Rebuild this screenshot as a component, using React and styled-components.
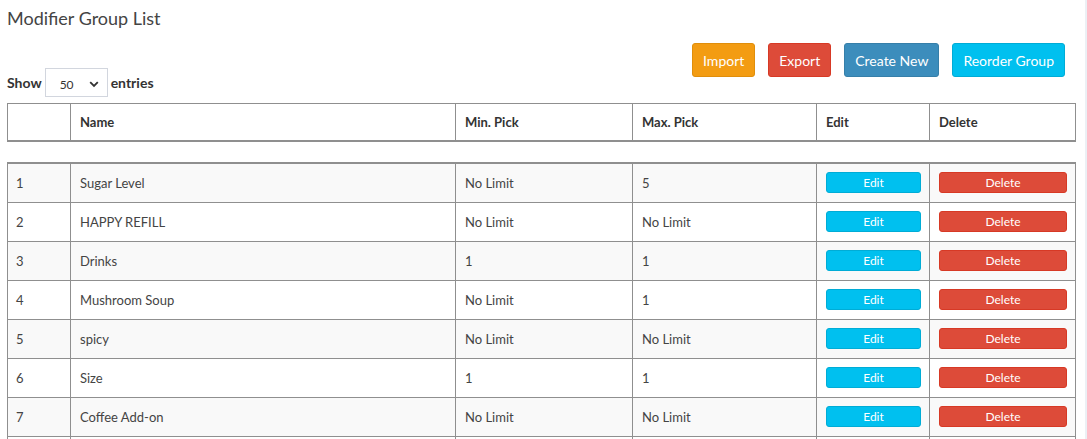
import React from 'react';
import styled, { createGlobalStyle } from 'styled-components';

const GlobalStyle = createGlobalStyle`
  html, body {
    margin: 0;
    padding: 0;
    overflow: hidden;
    background: #ecf0f5;
  }
  body {
    font-family: "Source Sans Pro", Lato, "Liberation Sans", sans-serif;
    color: #333;
  }
`;

const rows = [
  { id: 1, name: 'Sugar Level', min: 'No Limit', max: '5' },
  { id: 2, name: 'HAPPY REFILL', min: 'No Limit', max: 'No Limit' },
  { id: 3, name: 'Drinks', min: '1', max: '1' },
  { id: 4, name: 'Mushroom Soup', min: 'No Limit', max: '1' },
  { id: 5, name: 'spicy', min: 'No Limit', max: 'No Limit' },
  { id: 6, name: 'Size', min: '1', max: '1' },
  { id: 7, name: 'Coffee Add-on', min: 'No Limit', max: 'No Limit' }
];

const cols = [63, 385, 177, 184, 113, 146];

const ColGroup = () => (
  <colgroup>
    {cols.map((w, i) => (
      <col key={i} style={{ width: w }} />
    ))}
  </colgroup>
);

const App = () => (
  <Page>
    <GlobalStyle />
    <Box>
      <Title>Modifier Group List</Title>
      <Toolbar>
        <Length>
          <span>Show</span>
          <SelectBox>
            <span>50</span>
            <svg width="10" height="7" viewBox="0 0 10 7">
              <path d="M1.2 1.2 L5 5 L8.8 1.2" fill="none" stroke="#333" strokeWidth="1.8" />
            </svg>
          </SelectBox>
          <span>entries</span>
        </Length>
        <Actions>
          <Btn bg="#f39c12" bd="#e08e0b">Import</Btn>
          <Btn bg="#dd4b39" bd="#d73925">Export</Btn>
          <Btn bg="#3c8dbc" bd="#367fa9">Create New</Btn>
          <Btn bg="#00c0ef" bd="#00acd6">Reorder Group</Btn>
        </Actions>
      </Toolbar>
      <HeadTable>
        <ColGroup />
        <thead>
          <tr>
            <Th></Th>
            <Th>Name</Th>
            <Th>Min. Pick</Th>
            <Th>Max. Pick</Th>
            <Th>Edit</Th>
            <Th>Delete</Th>
          </tr>
        </thead>
      </HeadTable>
      <BodyTable>
        <ColGroup />
        <tbody>
          {rows.map((r, i) => (
            <Row key={r.id} odd={i % 2 === 0}>
              <Td>{r.id}</Td>
              <Td>{r.name}</Td>
              <Td>{r.min}</Td>
              <Td>{r.max}</Td>
              <Td>
                <SmallBtn bg="#00c0ef" bd="#00acd6">Edit</SmallBtn>
              </Td>
              <Td>
                <SmallBtn bg="#dd4b39" bd="#d73925">Delete</SmallBtn>
              </Td>
            </Row>
          ))}
          <Row>
            <Td />
            <Td />
            <Td />
            <Td />
            <Td />
            <Td />
          </Row>
        </tbody>
      </BodyTable>
    </Box>
  </Page>
);

const Page = styled.div`
  width: 1085px;
  height: 439px;
  background: #fff;
  overflow: hidden;
`;

const Box = styled.div`
  padding: 0 10px 0 7px;
`;

const Title = styled.h3`
  margin: 0;
  padding-top: 6px;
  font-size: 18px;
  font-weight: 400;
  line-height: 24px;
  color: #444;
`;

const Toolbar = styled.div`
  display: flex;
  justify-content: space-between;
  align-items: flex-start;
  margin-top: 13px;
  height: 60px;
`;

const Length = styled.div`
  display: flex;
  align-items: center;
  gap: 3px;
  margin-top: 25px;
  font-size: 14px;
  font-weight: 700;
  color: #333;
`;

const SelectBox = styled.div`
  width: 63px;
  height: 29px;
  border: 1px solid #d2d6de;
  display: flex;
  align-items: center;
  justify-content: space-between;
  padding: 3px 8px 0 14px;
  box-sizing: border-box;
  font-size: 12px;
  font-weight: 400;
  color: #333;
`;

const Actions = styled.div`
  display: flex;
  gap: 13px;
  margin-right: 10px;
`;

const Btn = styled.button`
  height: 34px;
  padding: 0 10px;
  border: 1px solid ${p => p.bd};
  border-radius: 3px;
  background: ${p => p.bg};
  color: #fff;
  font-family: inherit;
  font-size: 14px;
`;

const HeadTable = styled.table`
  width: 1068px;
  table-layout: fixed;
  border-collapse: collapse;
  border: 1px solid #8f8f8f;
  border-bottom-width: 2px;
`;

const Th = styled.th`
  height: 36px;
  padding: 0 9px;
  border-left: 1px solid #8f8f8f;
  text-align: left;
  font-size: 13px;
  font-weight: 700;
  color: #333;
`;

const BodyTable = styled.table`
  width: 1068px;
  margin-top: 20px;
  table-layout: fixed;
  border-collapse: collapse;
  border-top: 2px solid #8f8f8f;
`;

const Row = styled.tr`
  background: ${p => (p.odd ? '#f9f9f9' : '#fff')};
`;

const Td = styled.td`
  height: 39px;
  padding: 0 8px 0 9px;
  box-sizing: border-box;
  border: 1px solid #8f8f8f;
  font-size: 13px;
  color: #444;
  &:first-child {
    padding-left: 8px;
  }
`;

const SmallBtn = styled.button`
  display: block;
  width: 100%;
  height: 21px;
  padding: 0;
  border: 1px solid ${p => p.bd};
  border-radius: 3px;
  background: ${p => p.bg};
  color: #fff;
  font-family: inherit;
  font-size: 12px;
`;

export default App;
